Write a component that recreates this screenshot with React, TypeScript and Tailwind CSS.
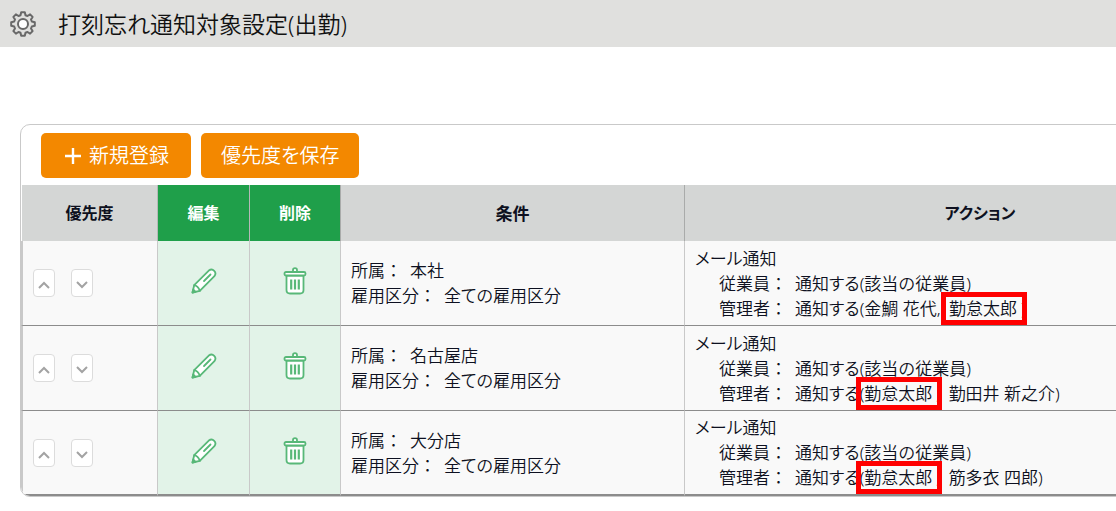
import React from 'react';
import clsx from 'clsx';

type Person = { name: string; highlight?: boolean };

type Rule = {
  id: number;
  group: string;
  managers: Person[];
};

const RULES: Rule[] = [
  {
    id: 1,
    group: '本社',
    managers: [{ name: '金鯛 花代' }, { name: '勤怠太郎', highlight: true }],
  },
  {
    id: 2,
    group: '名古屋店',
    managers: [{ name: '勤怠太郎', highlight: true }, { name: '勤田井 新之介' }],
  },
  {
    id: 3,
    group: '大分店',
    managers: [{ name: '勤怠太郎', highlight: true }, { name: '筋多衣 四郎' }],
  },
];

const GearIcon = () => (
  <svg
    viewBox="0 0 26 26"
    className="size-[26px] shrink-0"
    fill="none"
    stroke="#686868"
    strokeWidth="2"
    strokeLinejoin="round"
  >
    <path d="M11.2 1.2h3.6l.7 3 2 .8 2.6-1.6 2.5 2.5L21 8.5l.8 2 3 .7v3.6l-3 .7-.8 2 1.6 2.6-2.5 2.5-2.6-1.6-2 .8-.7 3h-3.6l-.7-3-2-.8-2.6 1.6-2.5-2.5L5 17.5l-.8-2-3-.7v-3.6l3-.7.8-2-1.6-2.6 2.5-2.5L8.5 5l2-.8z" />
    <circle cx="13" cy="13" r="5" fill="#fff" />
  </svg>
);

const PencilIcon = () => (
  <svg
    viewBox="0 0 26 26"
    className="size-[26px]"
    fill="#fff"
    stroke="#58b878"
    strokeWidth="1.8"
    strokeLinejoin="round"
    strokeLinecap="round"
  >
    <path d="M1.5 24.5 3.2 17.2 17.8 2.6q3-2.2 5.4.2t.2 5.4L8.8 22.8z" />
    <path d="M3.2 17.2q3.8.8 5.6 5.6M13 13l6.5-6.5" fill="none" />
    <path d="m1.5 24.5.7-3 2.3 2.3z" fill="#58b878" />
  </svg>
);

const TrashIcon = () => (
  <svg
    viewBox="0 0 24 28"
    className="h-7 w-6"
    fill="#fff"
    stroke="#58b878"
    strokeWidth="1.8"
    strokeLinejoin="round"
  >
    <path d="M10 5V3q0-1.800 2-1.800t2 1.800v2" />
    <path d="M3.500 8.500v14.500q0 3.500 3.500 3.500h10q3.500 0 3.500-3.500V8.500z" />
    <rect x="1.500" y="5" width="21" height="3.500" rx="1.500" />
    <path d="M8.200 12.500v10M12 12.500v10M15.800 12.500v10" strokeWidth="2.200" />
  </svg>
);

const Chevron = ({ up }: { up?: boolean }) => (
  <svg
    viewBox="0 0 12 8"
    className="h-2 w-3"
    fill="none"
    stroke="#a3a3a3"
    strokeWidth="2"
  >
    <path d={up ? 'M1 7 6 2l5 5' : 'M1 1l5 5 5-5'} />
  </svg>
);

const ManagerName = ({ person, first }: { person: Person; first: boolean }) => (
  <span
    className={clsx('relative', !first && 'ml-1', person.highlight && 'pr-1')}
  >
    {person.name}
    {person.highlight && (
      <span className="absolute -inset-y-[5px] -right-1.5 -left-2 border-5 border-[#ff0000]" />
    )}
  </span>
);

const Field = ({
  label,
  children,
}: {
  label: string;
  children: React.ReactNode;
}) => (
  <p>
    {label}：<span className="ml-2">{children}</span>
  </p>
);

const RuleRow = ({ rule }: { rule: Rule }) => {
  const cell =
    'h-[85px] border-b border-[#8c8c8c] group-last:border-b-2 border-l border-l-[#c9c9c9]';
  const moveButton =
    'flex h-7 w-[22px] items-center justify-center rounded border border-[#dcdcdc] bg-white pt-1';

  return (
    <tr className="group">
      <td className="h-[85px] border-b border-l-2 border-b-[#8c8c8c] border-l-[#c9c9c9] bg-[#f9f9f9] group-last:border-b-2">
        <div className="flex gap-4 pl-[10px]">
          <button type="button" aria-label="上へ" className={moveButton}>
            <Chevron up />
          </button>
          <button type="button" aria-label="下へ" className={moveButton}>
            <Chevron />
          </button>
        </div>
      </td>
      <td className={`${cell} bg-[#e2f3e8] pb-1`}>
        <button type="button" aria-label="編集" className="mx-auto block">
          <PencilIcon />
        </button>
      </td>
      <td className={`${cell} bg-[#e2f3e8] pb-1`}>
        <button type="button" aria-label="削除" className="mx-auto block">
          <TrashIcon />
        </button>
      </td>
      <td className={`${cell} bg-[#f9f9f9] pl-[10px]`}>
        <Field label="所属">{rule.group}</Field>
        <Field label="雇用区分">
          <span className="[font-feature-settings:'palt']">全ての雇用区分</span>
        </Field>
      </td>
      <td className={`${cell} bg-[#f9f9f9] pl-[10px]`}>
        <p className="[font-feature-settings:'palt']">メール通知</p>
        <div className="pl-6">
          <Field label="従業員">
            <span className="[font-feature-settings:'palt']">通知する</span>
            (該当の従業員)
          </Field>
          <Field label="管理者">
            <span className="[font-feature-settings:'palt']">通知する</span>(
            {rule.managers.map((person, i) => (
              <React.Fragment key={person.name}>
                {i > 0 && ', '}
                <ManagerName person={person} first={i === 0} />
              </React.Fragment>
            ))}
            )
          </Field>
        </div>
      </td>
    </tr>
  );
};

export default function App() {
  return (
    <div className="min-h-screen overflow-hidden bg-white font-['Noto_Sans','Noto_Sans_CJK_JP',sans-serif] font-[350] text-[#0d1020]">
      <header className="flex h-[47px] items-center gap-[22px] bg-[#e0e0de] px-[10px]">
        <GearIcon />
        <h1 className="text-[23px] leading-8 text-[#111] [font-feature-settings:'palt']">
          打刻忘れ通知対象設定(出勤)
        </h1>
      </header>

      {/* The action column runs on past the right edge of the window */}
      <main className="-mr-40 pt-[77px] pl-5">
        <section className="overflow-hidden rounded-[10px] border border-[#c9c9c9]">
          <div className="flex gap-[10px] px-5 pt-2 pb-[7px] text-[20px] leading-[45px] text-white">
            <button
              type="button"
              className="flex items-center gap-2 rounded-[5px] bg-[#f38800] pr-[22px] pl-6"
            >
              <svg
                viewBox="0 0 16 16"
                className="size-4"
                stroke="currentColor"
                strokeWidth="2.4"
              >
                <path d="M8 0v16M0 8h16" />
              </svg>
              新規登録
            </button>
            <button
              type="button"
              className="rounded-[5px] bg-[#f38800] px-5 [font-feature-settings:'palt']"
            >
              優先度を保存
            </button>
          </div>

          <table className="w-full table-fixed border-separate border-spacing-0 text-left text-[17px] leading-[25px]">
            <colgroup>
              <col className="w-[136px]" />
              <col className="w-[92px]" />
              <col className="w-[91px]" />
              <col className="w-[344px]" />
              <col />
            </colgroup>
            <thead>
              <tr className="font-bold">
                <th className="h-14 border-l border-white bg-[#d4d6d5] text-center text-base">
                  優先度
                </th>
                <th className="border-l border-[#b5b9b7] bg-[#1f9f4a] text-center text-base text-white">
                  編集
                </th>
                <th className="border-l border-[#b5b9b7] bg-[#1f9f4a] text-center text-base text-white">
                  削除
                </th>
                <th className="border-l border-[#a9abaa] bg-[#d4d6d5] text-center">
                  条件
                </th>
                <th className="border-l border-[#a9abaa] bg-[#d4d6d5] text-center text-base [font-feature-settings:'palt']">
                  アクション
                </th>
              </tr>
            </thead>
            <tbody>
              {RULES.map((rule) => (
                <RuleRow key={rule.id} rule={rule} />
              ))}
            </tbody>
          </table>
        </section>
      </main>
    </div>
  );
}
